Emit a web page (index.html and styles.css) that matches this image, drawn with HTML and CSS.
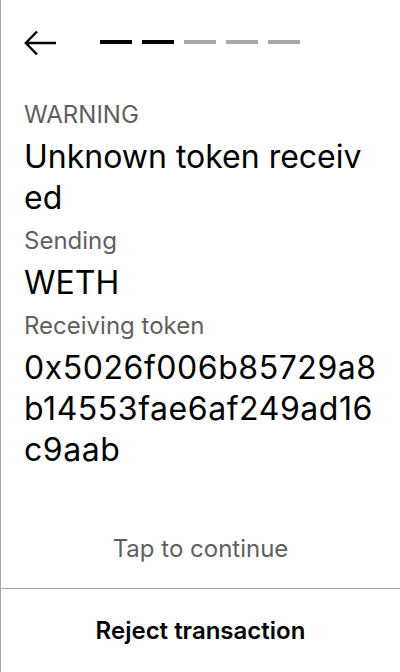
FILE: index.html
```html
<!DOCTYPE html>
<html>
<head>
<meta charset="utf-8">
<link rel="stylesheet" href="styles.css">
</head>
<body>
<div class="screen">
  <div class="header">
    <svg class="back" width="32" height="26" viewBox="0 0 32 26">
      <path d="M32 13H1.8M13 1.5L1.8 13L13 24.5" fill="none" stroke="#000" stroke-width="2.4"/>
    </svg>
    <div class="steps">
      <span class="dash done"></span>
      <span class="dash done"></span>
      <span class="dash"></span>
      <span class="dash"></span>
      <span class="dash"></span>
    </div>
  </div>
  <div class="content">
    <div class="label first">WARNING</div>
    <div class="value">Unknown token received</div>
    <div class="label">Sending</div>
    <div class="value">WETH</div>
    <div class="label">Receiving token</div>
    <div class="value address">0x5026f006b85729a8b14553fae6af249ad16c9aab</div>
  </div>
  <div class="tap">Tap to continue</div>
  <div class="footer">Reject transaction</div>
</div>
</body>
</html>
```
FILE: styles.css
```css
* { box-sizing: border-box; }
html, body { margin: 0; padding: 0; background: #fff; }
body { font-family: Inter, "Noto Sans", sans-serif; color: #000; }
.screen {
  width: 400px;
  height: 672px;
  border-left: 1px solid #a8a8a8;
  display: flex;
  flex-direction: column;
}
.header {
  height: 94px;
  padding: 30px 0 0 23px;
  display: flex;
  align-items: flex-start;
}
.back { display: block; flex: none; }
.steps {
  display: flex;
  gap: 10px;
  margin-left: 44px;
  margin-top: 10px;
}
.dash { width: 32px; height: 4px; background: #a8a8a8; }
.dash.done { background: #000; }
.content {
  flex: 1;
  padding: 0 23px;
  word-break: break-all;
}
.label {
  font-size: 24px;
  line-height: 42px;
  color: #5f5f5f;
  margin-top: 2px;
}
.label.first { margin-top: 0; }
.value {
  font-size: 32px;
  line-height: 41px;
  color: #000;
}
.value.address { letter-spacing: 0.55px; }
.tap {
  height: 80px;
  display: flex;
  align-items: center;
  justify-content: center;
  font-size: 24px;
  color: #5f5f5f;
}
.footer {
  height: 84px;
  border-top: 1px solid #a8a8a8;
  display: flex;
  align-items: center;
  justify-content: center;
  font-size: 24px;
  font-weight: 600;
  color: #000;
}
```
